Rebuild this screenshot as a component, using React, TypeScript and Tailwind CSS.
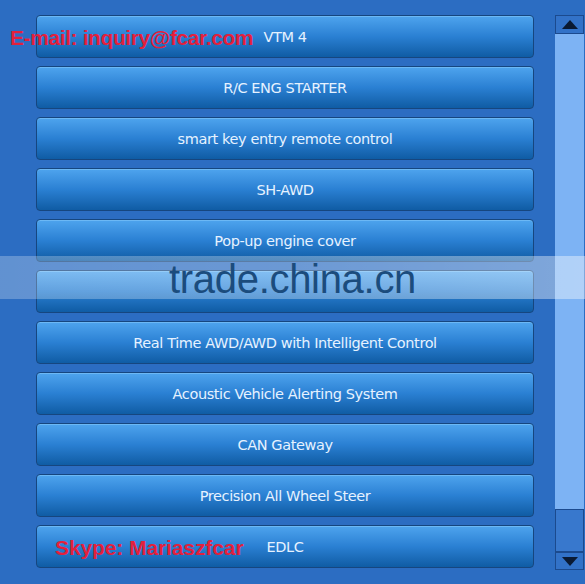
import React from 'react';

const items = [
  'VTM 4',
  'R/C ENG STARTER',
  'smart key entry remote control',
  'SH-AWD',
  'Pop-up engine cover',
  '',
  'Real Time AWD/AWD with Intelligent Control',
  'Acoustic Vehicle Alerting System',
  'CAN Gateway',
  'Precision All Wheel Steer',
  'EDLC',
];

const MenuButton: React.FC<{ label: string }> = ({ label }) => (
  <div className="h-[43px] w-full rounded-[4px] border border-[#16467f] bg-gradient-to-b from-[#4ea4ee] via-[#2a80d3] to-[#0f5ca4] flex items-center justify-center pt-[2px] shadow-[inset_0_1px_0_#6cb8f5]">
    <span className="text-[14.5px] text-[#e6f2ff] font-['DejaVu_Sans',sans-serif] tracking-[-0.4px]">{label}</span>
  </div>
);

const App: React.FC = () => {
  return (
    <div className="relative w-[585px] h-[584px] bg-[#2c6dc2] overflow-hidden flex">
      {/* Button list */}
      <div className="w-[534px] pl-[36px] pt-[15px] flex flex-col gap-[8px]">
        {items.map((label, i) => (
          <MenuButton key={i} label={label} />
        ))}
      </div>

      {/* Scrollbar */}
      <div className="ml-[21px] mt-[15px] w-[29px] h-[555px] flex flex-col bg-[#7db3f4]">
        <div className="h-[19px] border border-[#1b4a8e] bg-[#3272c8] flex items-center justify-center">
          <svg width="16" height="9" viewBox="0 0 16 9"><path d="M0 9 L8 0 L16 9 Z" fill="#0a1a33" /></svg>
        </div>
        <div className="flex-1" />
        <div className="h-[43px] border border-[#1b4a8e] bg-[#3878cd]" />
        <div className="h-[18px] border border-[#1b4a8e] bg-[#3272c8] flex items-center justify-center">
          <svg width="16" height="9" viewBox="0 0 16 9"><path d="M0 0 L8 9 L16 0 Z" fill="#0a1a33" /></svg>
        </div>
      </div>

      {/* Contact overlays */}
      <div className="absolute left-[10px] top-[25px] text-[21px] leading-[26px] font-bold text-[#e3203c] font-['Liberation_Sans',sans-serif] tracking-[-0.4px]">
        E-mail: inquiry@fcar.com
      </div>
      <div className="absolute left-[55px] top-[535px] text-[21px] leading-[26px] font-bold text-[#e3203c] font-['Liberation_Sans',sans-serif] tracking-[-0.1px]">
        Skype: Mariaszfcar
      </div>

      {/* Watermark band */}
      <div className="absolute left-0 top-[256px] w-[585px] h-[43px] bg-gradient-to-r from-[#ffffff40] via-[#ffffff4d] to-[#ffffff66] flex items-center justify-center">
        <span className="text-[40px] leading-none text-[#1b4c7d] font-['Liberation_Sans',sans-serif] tracking-[-0.3px] translate-y-[1px]">
          trade.china.cn
        </span>
      </div>
    </div>
  );
};

export default App;
